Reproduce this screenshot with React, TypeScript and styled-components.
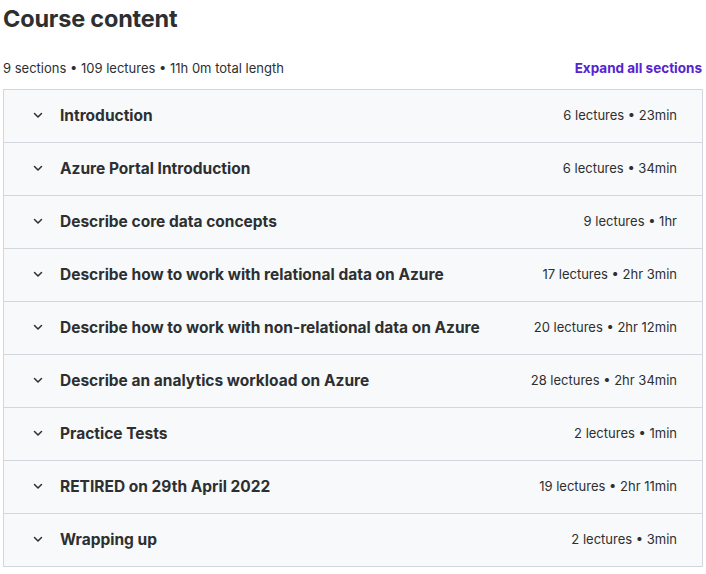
import React from 'react';
import styled, { createGlobalStyle } from 'styled-components';

const GlobalStyle = createGlobalStyle`
  body {
    margin: 0;
    background: #ffffff;
    font-family: Inter, "Noto Sans", sans-serif;
    color: #2d2f31;
  }
`;

const Page = styled.div`
  padding: 4px 3px 0 3px;
`;

const Heading = styled.h2`
  margin: 0;
  font-size: 23.5px;
  font-weight: 700;
  line-height: 29px;
  letter-spacing: -0.2px;
  color: #2d2f31;
`;

const SummaryRow = styled.div`
  display: flex;
  align-items: center;
  justify-content: space-between;
  margin-top: 23px;
  height: 24px;
  margin-bottom: 9px;
`;

const SummaryText = styled.span`
  font-size: 13px;
  color: #2d2f31;
`;

const ExpandButton = styled.button`
  background: none;
  border: none;
  padding: 0;
  margin-right: 1px;
  font-family: inherit;
  font-size: 13.5px;
  font-weight: 700;
  color: #5624d0;
  cursor: pointer;
`;

const Panel = styled.div`
  border: 1px solid #d1d7dc;
  border-bottom: none;
`;

const SectionRow = styled.div`
  display: flex;
  align-items: center;
  height: 53px;
  padding: 0 25px 2px 29px;
  box-sizing: border-box;
  background: #f7f9fa;
  border-bottom: 1px solid #d1d7dc;
`;

const Chevron = styled.svg`
  width: 10px;
  height: 10px;
  flex-shrink: 0;
  margin-right: 17px;
`;

const SectionTitle = styled.span`
  flex: 1;
  font-size: 15.5px;
  font-weight: 700;
  color: #2d2f31;
`;

const SectionMeta = styled.span`
  font-size: 13px;
  color: #2d2f31;
  white-space: nowrap;
`;

const sections = [
  { title: 'Introduction', meta: '6 lectures • 23min' },
  { title: 'Azure Portal Introduction', meta: '6 lectures • 34min' },
  { title: 'Describe core data concepts', meta: '9 lectures • 1hr' },
  { title: 'Describe how to work with relational data on Azure', meta: '17 lectures • 2hr 3min' },
  { title: 'Describe how to work with non-relational data on Azure', meta: '20 lectures • 2hr 12min' },
  { title: 'Describe an analytics workload on Azure', meta: '28 lectures • 2hr 34min' },
  { title: 'Practice Tests', meta: '2 lectures • 1min' },
  { title: 'RETIRED on 29th April 2022', meta: '19 lectures • 2hr 11min' },
  { title: 'Wrapping up', meta: '2 lectures • 3min' },
];

export default function App() {
  return (
    <Page>
      <GlobalStyle />
      <Heading>Course content</Heading>
      <SummaryRow>
        <SummaryText>9 sections • 109 lectures • 11h 0m total length</SummaryText>
        <ExpandButton>Expand all sections</ExpandButton>
      </SummaryRow>
      <Panel>
        {sections.map((s) => (
          <SectionRow key={s.title}>
            <Chevron viewBox="0 0 10 10">
              <polyline points="1.5,3.5 5,7 8.5,3.5" fill="none" stroke="#2d2f31" strokeWidth="1.5" strokeLinecap="round" strokeLinejoin="round" />
            </Chevron>
            <SectionTitle>{s.title}</SectionTitle>
            <SectionMeta>{s.meta}</SectionMeta>
          </SectionRow>
        ))}
      </Panel>
    </Page>
  );
}
